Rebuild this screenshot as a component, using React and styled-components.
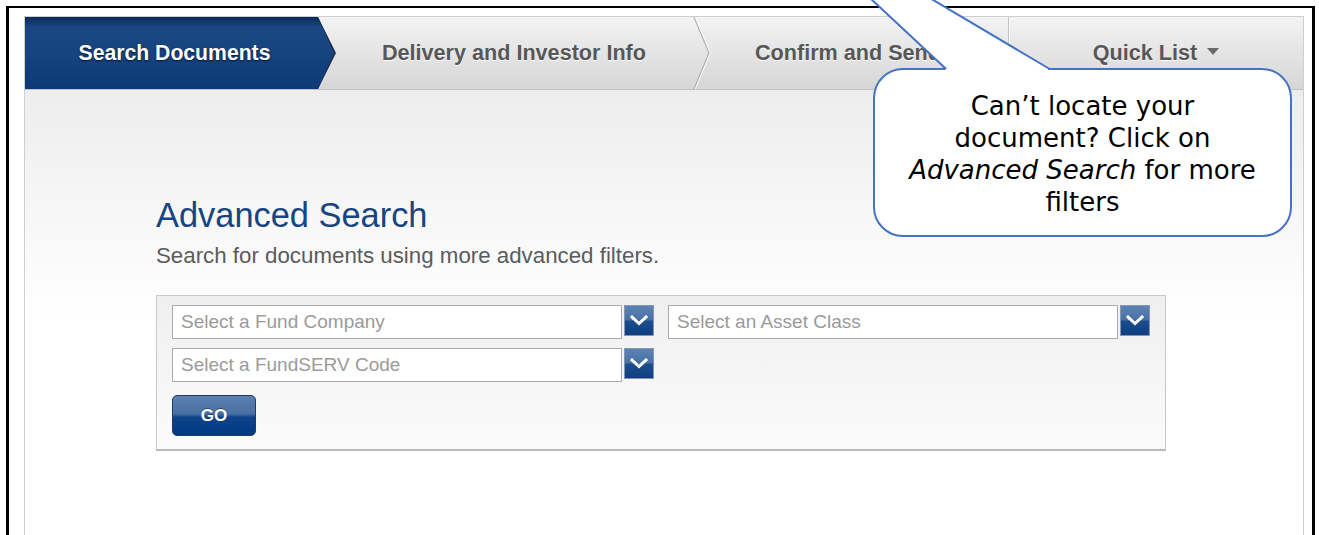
import React from "react";
import styled, { createGlobalStyle, css } from "styled-components";

const GlobalStyle = createGlobalStyle`
  html, body { margin: 0; padding: 0; background: #fff; }
  body { font-family: "Liberation Sans", Arial, sans-serif; }
  * { box-sizing: border-box; }
`;

const Page = styled.div`
  position: relative;
  width: 1319px;
  height: 535px;
  overflow: hidden;
`;

const Frame = styled.div`
  margin: 6px 0 0 6px;
  width: 1309px;
  height: 560px;
  border: 3px solid #000;
  border-top-width: 2px;
  border-bottom: none;
  padding: 8px 8px 0 15px;
  background: #fff;
`;

const Shell = styled.div`
  height: 100%;
  border: 1px solid #cfcfcf;
  border-bottom: none;
  display: flex;
  flex-direction: column;
`;

const TabBar = styled.nav`
  display: grid;
  grid-template-columns: 293px 377px 313px 1fr;
  height: 73px;
  border-bottom: 1px solid #c2c2c2;
  background: linear-gradient(#f3f3f3, #d6d6d6);
`;

const blueFill = "linear-gradient(#0a2a58 0%, #1a4682 14%, #17437f 50%, #0c3a77 100%)";

const Tab = styled.div`
  position: relative;
  display: flex;
  align-items: center;
  justify-content: center;
  padding: ${(p) => p.$pad || "0"};
  font-size: 21.6px;
  font-weight: bold;
  color: #575757;
  text-shadow: 0 1px 0 #fff;
  white-space: nowrap;

  ${(p) =>
    p.$active &&
    css`
      z-index: 2;
      font-size: 21.2px;
      color: #fff;
      text-shadow: 0 1px 2px rgba(0, 0, 0, 0.7);
      background: ${blueFill};
      &::before,
      &::after {
        content: "";
        position: absolute;
        top: 0;
        bottom: 0;
        clip-path: polygon(0 0, 100% 50%, 0 100%);
      }
      &::before {
        right: -18px;
        width: 18px;
        background: linear-gradient(90deg, #0a1d3c, #22324c);
      }
      &::after {
        right: -16px;
        width: 16px;
        background: ${blueFill};
      }
    `}

  ${(p) =>
    p.$divider &&
    css`
      border-left: 1px solid #c4c4c4;
      box-shadow: inset 1px 0 0 #fafafa;
    `}
`;

const Chevron = styled.svg`
  position: absolute;
  top: 0;
  right: -16px;
  width: 17px;
  height: 100%;
  z-index: 1;
  overflow: visible;
`;

const Caret = styled.span`
  display: inline-block;
  width: 0;
  height: 0;
  margin-left: 10px;
  margin-top: -3px;
  border-left: 6.5px solid transparent;
  border-right: 6.5px solid transparent;
  border-top: 7px solid #6a6a6a;
`;

const Content = styled.main`
  flex: 1;
  padding: 105px 0 0 131px;
  background: linear-gradient(#ededed 0, #ffffff 230px);
`;

const Heading = styled.h1`
  margin: 0;
  font-size: 34.4px;
  font-weight: normal;
  line-height: 40px;
  color: #174583;
`;

const Subtitle = styled.p`
  margin: 8px 0 0;
  font-size: 22.3px;
  line-height: 26px;
  color: #5b5b5b;
`;

const FilterPanel = styled.section`
  margin-top: 26px;
  width: 1010px;
  border: 1px solid #c9c9c9;
  border-bottom: 2px solid #b9b9b9;
  padding: 9px 15px 13px;
  background: linear-gradient(#efefef, #fbfbfb);
  display: flex;
  flex-direction: column;
  align-items: flex-start;
`;

const Fields = styled.div`
  display: grid;
  grid-template-columns: repeat(2, 482px);
  gap: 9px 14px;
`;

const SelectBox = styled.div`
  display: flex;
  align-items: flex-start;
  gap: 2px;
`;

const SelectField = styled.div`
  width: 450px;
  height: 34px;
  border: 1px solid #aaa;
  background: #fff;
  padding: 0 8px;
  font-size: 19px;
  line-height: 32px;
  color: #9a9a9a;
  white-space: nowrap;
`;

const DropButton = styled.div`
  width: 30px;
  height: 31px;
  border: 1px solid #8396b2;
  background: linear-gradient(#5d83b3 0%, #4870a4 48%, #1c4e8e 52%, #0e3e80 100%);
  display: flex;
  align-items: center;
  justify-content: center;
`;

const GoButton = styled.button`
  margin-top: 13px;
  width: 84px;
  height: 41px;
  border-radius: 5px;
  border: 1px solid #1b3c6e;
  background: linear-gradient(#5b80af 0%, #4a70a3 45%, #0e4489 55%, #003a82 100%);
  color: #fff;
  font-family: "Liberation Sans", Arial, sans-serif;
  font-size: 17px;
  font-weight: bold;
  text-shadow: 0 -1px 0 rgba(0, 0, 0, 0.4);
  padding: 0;
`;

const Callout = styled.div`
  position: absolute;
  left: 873px;
  top: 68px;
  width: 419px;
  height: 169px;
  border: 2px solid #4472c4;
  border-radius: 30px;
  background: #fff;
  padding-top: 20px;
  text-align: center;
  font-family: "DejaVu Sans", Verdana, sans-serif;
  font-size: 26px;
  line-height: 32px;
  color: #000;
  z-index: 5;
`;

const CalloutTail = styled.svg`
  position: absolute;
  left: -112px;
  top: -172px;
  width: 290px;
  height: 176px;
  overflow: visible;
`;

function ChevronDown() {
  return (
    <svg width="18" height="11" viewBox="0 0 18 11">
      <polyline points="2,2 9,8.5 16,2" fill="none" stroke="#fff" strokeWidth="3" strokeLinecap="square" />
    </svg>
  );
}

function Select({ label }) {
  return (
    <SelectBox>
      <SelectField>{label}</SelectField>
      <DropButton>
        <ChevronDown />
      </DropButton>
    </SelectBox>
  );
}

export default function App() {
  return (
    <Page>
      <GlobalStyle />
      <Frame>
        <Shell>
          <TabBar>
            <Tab $active $pad="0 0 0 6px">Search Documents</Tab>
            <Tab $pad="0 0 0 15px">
              Delivery and Investor Info
              <Chevron viewBox="0 0 17 72" preserveAspectRatio="none">
                <polyline points="0,0 15,36 0,72" fill="none" stroke="#b2b2b2" strokeWidth="1.3" />
                <polyline points="1.3,0 16.3,36 1.3,72" fill="none" stroke="#fafafa" strokeWidth="1" />
              </Chevron>
            </Tab>
            <Tab $pad="0 7px 0 0">Confirm and Send</Tab>
            <Tab $divider>
              Quick List
              <Caret />
            </Tab>
          </TabBar>
          <Content>
            <Heading>Advanced Search</Heading>
            <Subtitle>Search for documents using more advanced filters.</Subtitle>
            <FilterPanel>
              <Fields>
                <Select label="Select a Fund Company" />
                <Select label="Select an Asset Class" />
                <Select label="Select a FundSERV Code" />
              </Fields>
              <GoButton type="button">GO</GoButton>
            </FilterPanel>
          </Content>
        </Shell>
      </Frame>
      <Callout>
        <CalloutTail viewBox="0 0 290 176">
          <polygon points="3,3 182,170 182,175 285,175 285,170" fill="#fff" />
          <polyline points="183.1,171 3,3 286.7,171" fill="none" stroke="#4472c4" strokeWidth="2" />
        </CalloutTail>
        Can’t locate your
        <br />
        document? Click on
        <br />
        <em>Advanced Search</em> for more
        <br />
        filters
      </Callout>
    </Page>
  );
}
